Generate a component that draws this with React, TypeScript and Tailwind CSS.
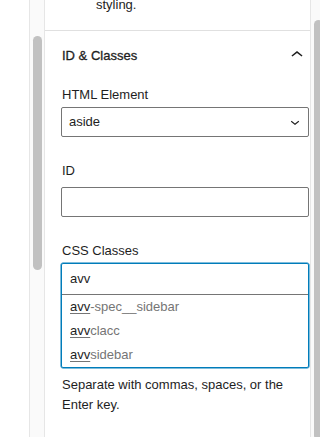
import React from "react";

function ChevronUp() {
  return (
    <svg width="24" height="24" viewBox="0 0 24 24" className="shrink-0 -mt-[3px]" fill="#1e1e1e">
      <path d="M6.5 12.4L12 8l5.5 4.4-.9 1.2L12 10l-4.6 3.6-1-1.2z" />
    </svg>
  );
}

function ChevronDown() {
  return (
    <svg width="18" height="18" viewBox="0 0 24 24" className="shrink-0" fill="#1e1e1e">
      <path d="M17.5 11.6L12 16l-5.5-4.4.9-1.2L12 14l4.6-3.6 1 1.2z" />
    </svg>
  );
}

function Suggestion({ rest }: { rest: string }) {
  return (
    <div className="h-[24px] leading-[24px] pl-[8px] text-[#757575] whitespace-nowrap">
      <span className="text-[#1e1e1e] underline underline-offset-[2px] decoration-[#757575]">avv</span>
      {rest}
    </div>
  );
}

export default function App() {
  return (
    <div className="w-[320px] h-[437px] flex bg-white overflow-hidden text-[13px] text-[#1e1e1e] font-['Liberation_Sans',Arial,sans-serif]">
      <div className="w-[29px] shrink-0" />
      <div className="w-[16px] shrink-0 border-l border-r border-[#e6e6e6] bg-[#fafafa] pl-[3px]">
        <div className="mt-[36px] w-[9px] h-[234px] rounded-full bg-[#c1c1c1]" />
      </div>
      <div className="flex-1 min-w-0 flex flex-col">
        <div className="h-[31px] shrink-0 border-b border-[#e0e0e0] pl-[51px]">
          <div className="-mt-[5px] leading-5">styling.</div>
        </div>
        <div className="pl-[16px] pr-[1px] flex flex-col">
          <div className="pt-[15px] flex items-start justify-between">
            <div className="leading-5 font-medium pl-[1px] [-webkit-text-stroke:0.3px_#1e1e1e]">ID &amp; Classes</div>
            <ChevronUp />
          </div>
          <div className="mt-[18px] leading-5 pl-[1px]">HTML Element</div>
          <div className="mt-[2px] h-[30px] border border-[#757575] rounded-[2px] flex items-center justify-between pl-[7px] pr-[4px]">
            <span className="leading-5">aside</span>
            <ChevronDown />
          </div>
          <div className="mt-[24px] leading-5 pl-[1px]">ID</div>
          <div className="mt-[6px] h-[30px] border border-[#757575] rounded-[2px]" />
          <div className="mt-[24px] leading-5 pl-[1px]">CSS Classes</div>
          <div className="mt-[2px] border border-[#007cba] rounded-[2px] shadow-[0_0_0_0.5px_#007cba]">
            <div className="h-[31px] flex items-center pl-[8px] border-b border-[#757575]">
              <span className="leading-5">avv</span>
            </div>
            <Suggestion rest="-spec__sidebar" />
            <Suggestion rest="clacc" />
            <Suggestion rest="sidebar" />
          </div>
          <div className="mt-[7px] leading-5 pl-[1px]">
            Separate with commas, spaces, or the Enter key.
          </div>
        </div>
      </div>
      <div className="w-[10px] shrink-0 border-l border-[#e6e6e6] bg-[#fafafa] pl-[3px] overflow-hidden">
        <div className="mt-[20px] w-[9px] h-[420px] rounded-full bg-[#c1c1c1]" />
      </div>
    </div>
  );
}
